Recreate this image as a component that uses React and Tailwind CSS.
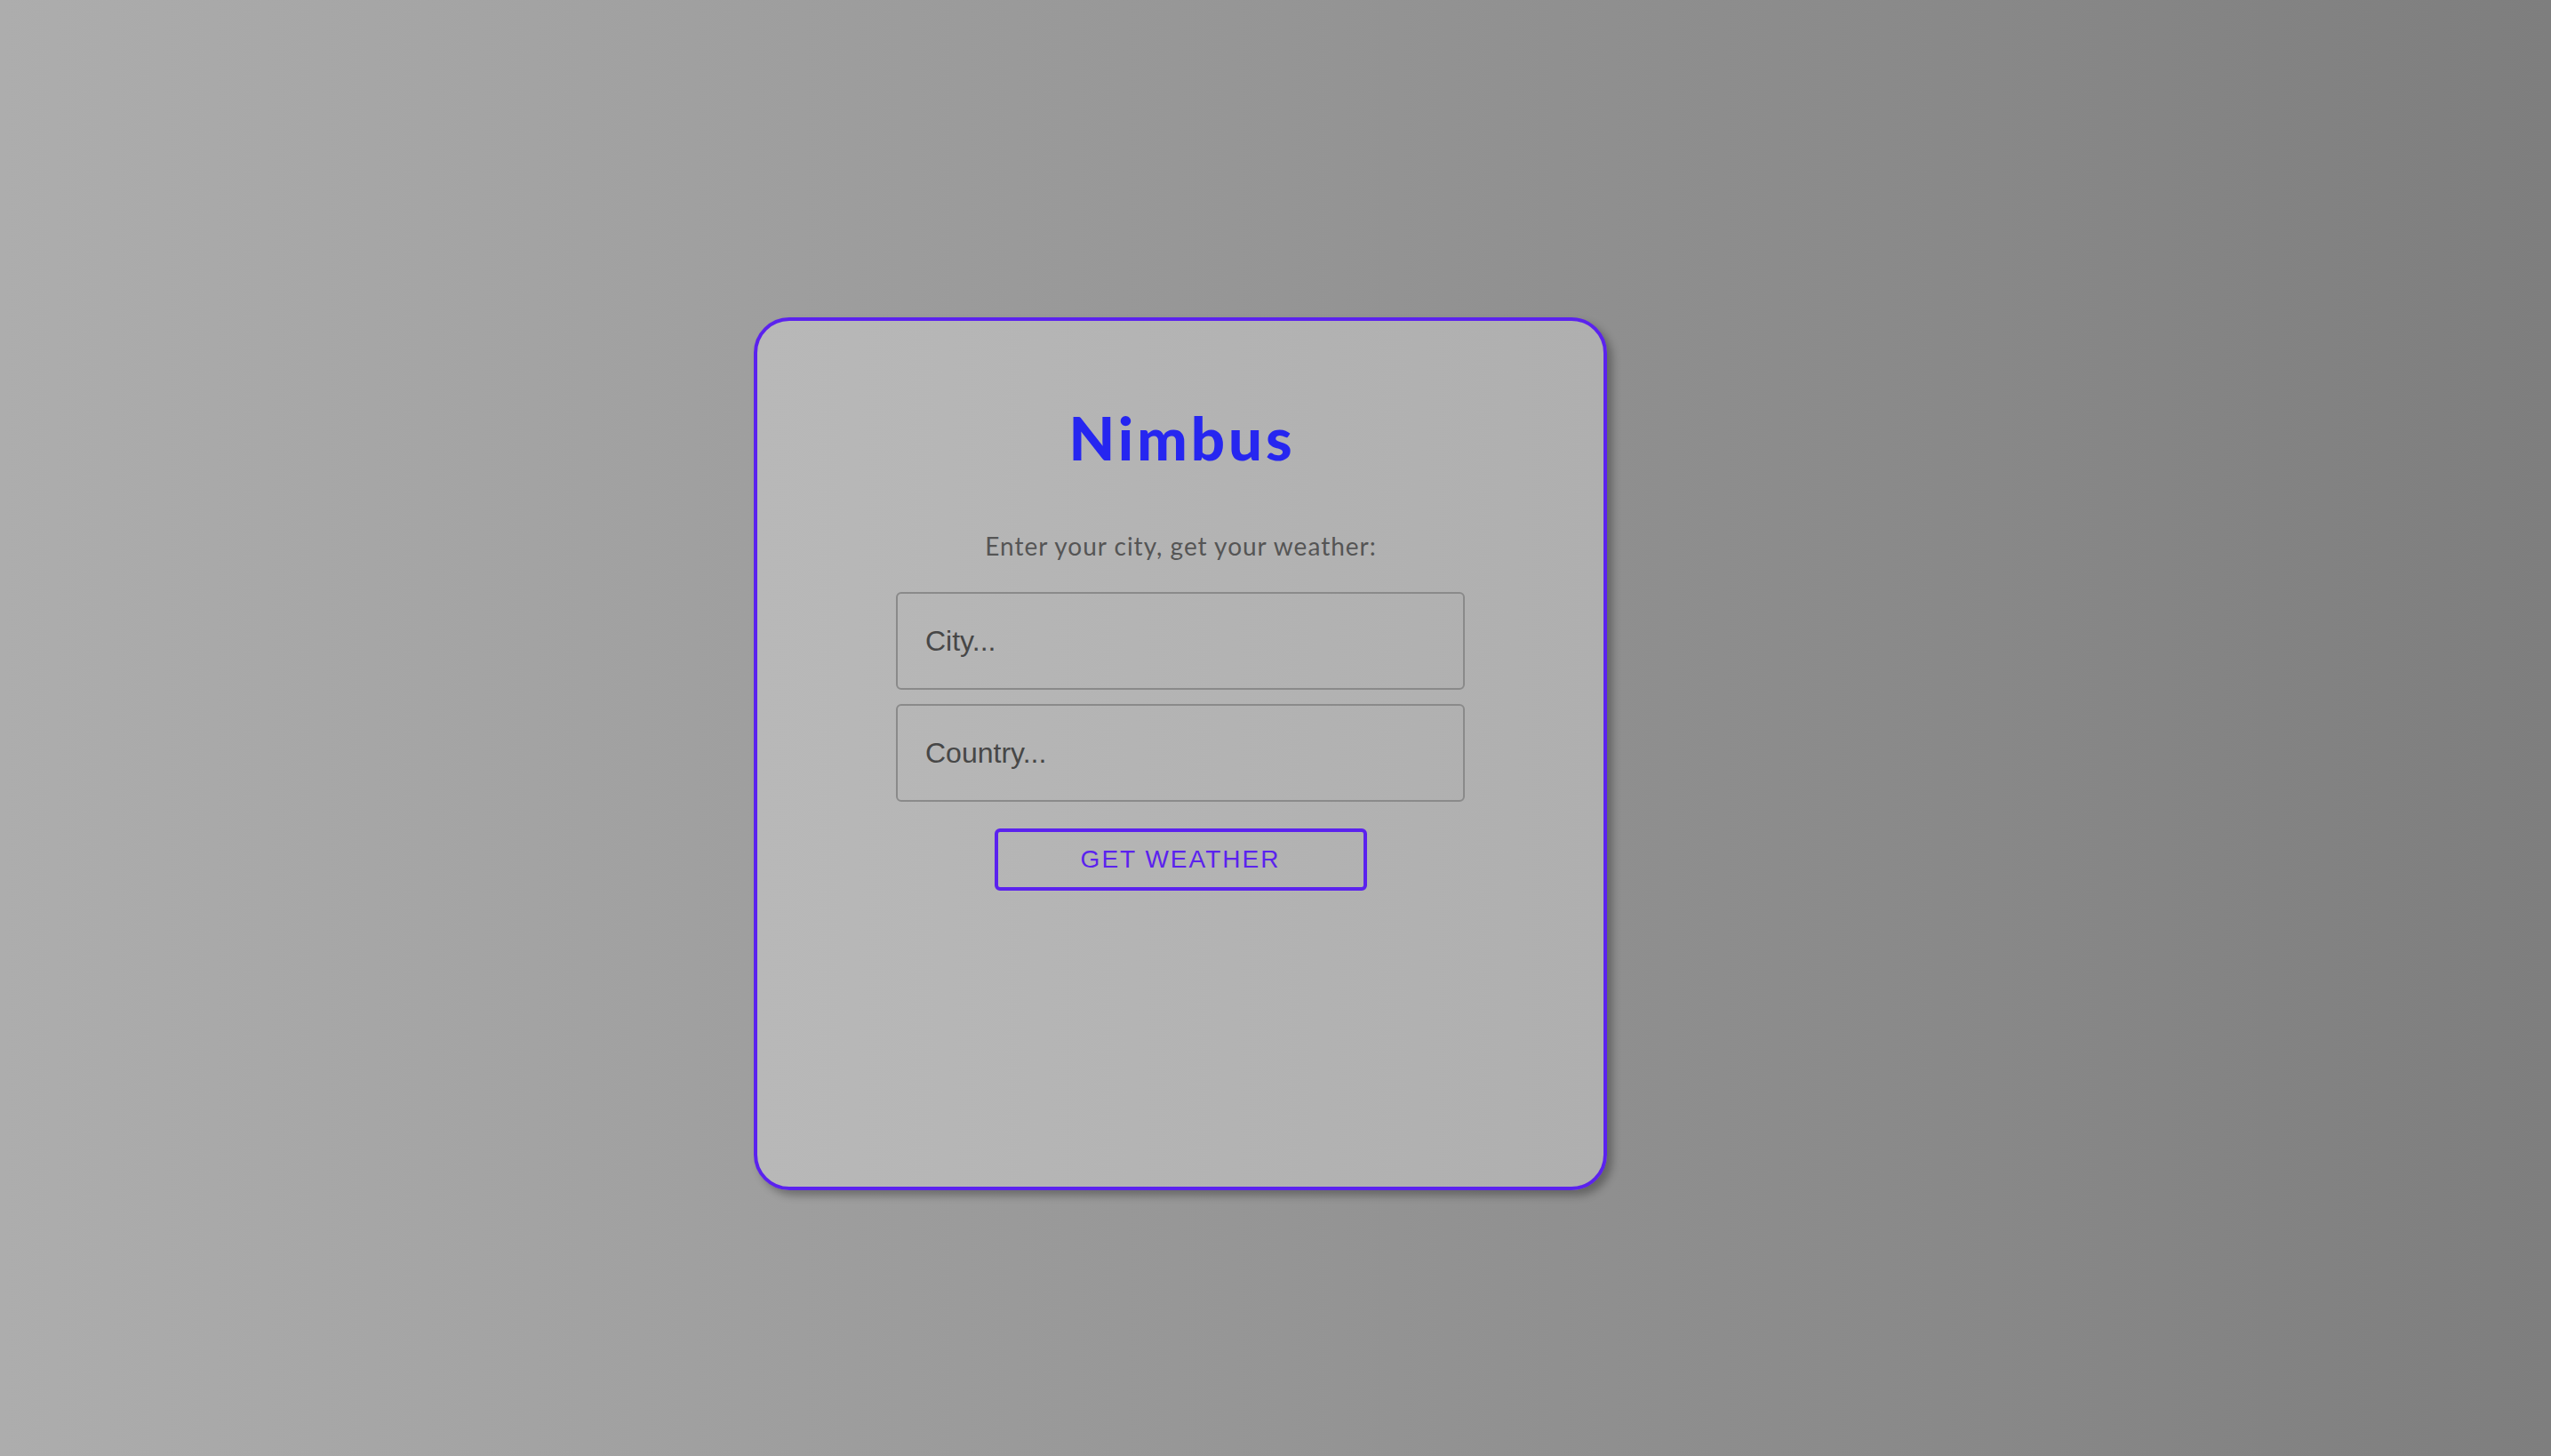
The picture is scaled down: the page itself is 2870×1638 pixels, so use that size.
import React, { useState } from "react";

export default function App() {
  const [city, setCity] = useState("");
  const [country, setCountry] = useState("");

  const inputClass =
    "h-[110px] w-[640px] rounded-md border-2 border-[#8a8a8a] bg-transparent px-[31px] text-[32px] text-[#333] outline-none placeholder:text-[#474747] [font-family:'Liberation_Sans',Arial,sans-serif]";

  return (
    <div className="min-h-[1638px] w-full bg-gradient-to-r from-[#adadad] to-[#7e7e7e] pl-[848px] pt-[357px]">
      <div className="flex h-[982px] w-[960px] flex-col items-center rounded-[40px] border-4 border-[#5b22ee] bg-gradient-to-r from-[#b8b8b8] to-[#afafaf] pt-[98px] shadow-[6px_6px_10px_rgba(0,0,0,0.3)]">
        <h1 className="pl-[4px] text-[67px] font-black leading-none tracking-[4px] text-[#2626f0] [font-family:Lato,'Open_Sans',sans-serif]">
          Nimbus
        </h1>

        <p className="mt-[74px] pl-[1px] text-[28px] leading-none tracking-[1px] text-[#555] [font-family:Lato,'Open_Sans',sans-serif]">
          Enter your city, get your weather:
        </p>

        <div className="mt-[38px] flex flex-col gap-4">
          <input
            className={inputClass}
            placeholder="City..."
            value={city}
            onChange={(e) => setCity(e.target.value)}
          />
          <input
            className={inputClass}
            placeholder="Country..."
            value={country}
            onChange={(e) => setCountry(e.target.value)}
          />
        </div>

        <button className="mt-[30px] h-[70px] w-[419px] rounded-md border-4 border-[#5b22ee] bg-transparent text-[28px] uppercase tracking-[2px] text-[#5b22ee] [font-family:'Liberation_Sans',Arial,sans-serif]">
          Get Weather
        </button>
      </div>
    </div>
  );
}
